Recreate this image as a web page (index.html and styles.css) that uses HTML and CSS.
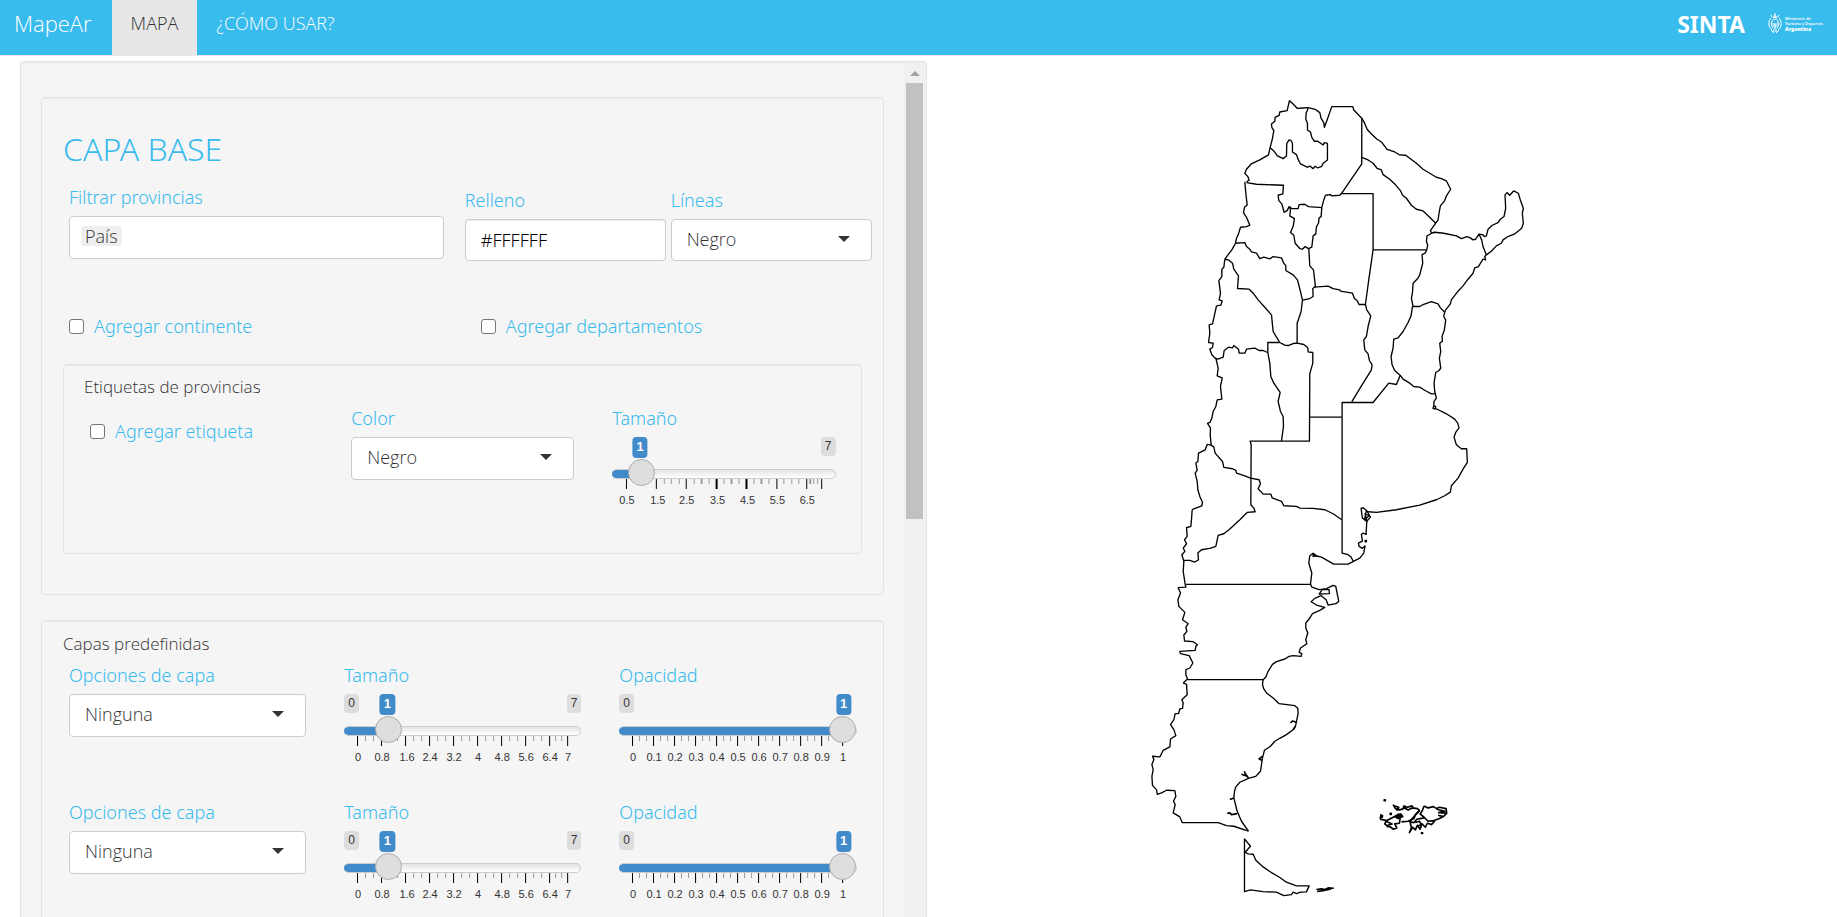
FILE: index.html
```html
<!DOCTYPE html>
<html lang="es">
<head>
<meta charset="utf-8">
<title>MapeAr</title>
<link rel="stylesheet" href="styles.css">
</head>
<body>
<nav class="navbar">
  <a class="brand" href="#">MapeAr</a>
  <a class="nav-link active" href="#mapa">MAPA</a>
  <a class="nav-link" href="#como">¿CÓMO USAR?</a>
  <div class="logos">
    <span class="sinta">SINTA</span>
    <span class="ministry">
      <svg width="14" height="22" viewBox="0 0 14 22" fill="none" stroke="#fff" stroke-width="1">
        <ellipse cx="7" cy="12" rx="3.500" ry="5"/>
        <path d="M3 6C0 9 0 15 4 18M11 6c3 3 3 9-1 12M3.500 12h7M7 12v4M5 14h4"/>
        <path d="M4 5L3 3M7 5V1M10 5l1-2M5 5.500Q7 2 9 5.500Z"/>
        <path d="M3 18l3 3M11 18l-3 3M5 19h4"/>
      </svg>
      <span class="ministry-text"><span>Ministerio de</span><span>Turismo y Deportes</span><b>Argentina</b></span>
    </span>
  </div>
</nav>

<main class="page" id="mapa">
  <aside class="sidebar">
    <form class="sidebar-body">
      <section class="well base">
        <h2>CAPA BASE</h2>
        <div class="row base-row">
          <div class="field filter">
            <label for="provincias">Filtrar provincias</label>
            <div class="tags"><span class="tag">País</span><input id="provincias" type="text"></div>
          </div>
          <div class="pair">
            <div class="field">
              <label for="relleno">Relleno</label>
              <input class="control color" id="relleno" type="text" value="#FFFFFF">
            </div>
            <div class="field">
              <label for="lineas">Líneas</label>
              <div class="select"><select class="control" id="lineas"><option>Negro</option></select></div>
            </div>
          </div>
        </div>
        <div class="row checks">
          <label class="check"><input type="checkbox">Agregar continente</label>
          <label class="check"><input type="checkbox">Agregar departamentos</label>
        </div>
        <section class="well inner">
          <h3>Etiquetas de provincias</h3>
          <div class="row thirds">
            <label class="check lowered"><input type="checkbox">Agregar etiqueta</label>
            <div class="field">
              <label for="color">Color</label>
              <div class="select"><select class="control" id="color"><option>Negro</option></select></div>
            </div>
            <div class="field">
              <label for="tam0">Tamaño</label>
              <div class="slider" style="--f:.075">
                <div class="bounds"><span></span><span class="bound">7</span></div>
                <output class="bubble" for="tam0">1</output>
                <input id="tam0" type="range" min="0" max="1000" value="75">
                <svg class="scale" viewBox="0 0 224 28">
                  <path class="minor" d="M52.500 0v5M59.500 0v5M67.500 0v5M82.500 0v5M97.500 0v5M112.500 0v5M127.500 0v5M142.500 0v5M157.500 0v5M172.500 0v5M180.500 0v5M187.500 0v5M202.500 0v5M206.500 0v5"/>
                  <path class="minor wide" d="M90 0v5M120 0v5M150 0v5M199 0v5"/>
                  <path class="major" d="M14.500 0v10M44.500 0v10M74.500 0v10M165.500 0v10M195.500 0v10M210.500 0v10"/>
                  <path class="major wide" d="M105 0v10M135 0v10"/>
                  <text x="15" y="25">0.5</text><text x="46" y="25">1.5</text><text x="75" y="25">2.5</text><text x="106" y="25">3.5</text><text x="136" y="25">4.5</text><text x="166" y="25">5.5</text><text x="196" y="25">6.5</text>
                </svg>
              </div>
            </div>
          </div>
        </section>
      </section>

      <section class="well layers">
        <h3>Capas predefinidas</h3>
        <div class="row thirds">
          <div class="field">
            <label for="capa1">Opciones de capa</label>
            <div class="select"><select class="control" id="capa1"><option>Ninguna</option></select></div>
          </div>
          <div class="field">
            <label for="tam1">Tamaño</label>
            <div class="slider" style="--f:.143">
              <div class="bounds"><span class="bound">0</span><span class="bound">7</span></div>
              <output class="bubble" for="tam1">1</output>
              <input id="tam1" type="range" min="0" max="7" value="1">
              <svg class="scale" viewBox="0 0 237 28">
                <path class="minor" d="M21.5 0v5M29.5 0v5M45.5 0v5M53.5 0v5M69.5 0v5M77.5 0v5M93.5 0v5M101.5 0v5M117.5 0v5M125.5 0v5M141.5 0v5M149.5 0v5M165.5 0v5M173.5 0v5M189.5 0v5M197.5 0v5M211.5 0v5M217.5 0v5"/>
                <path class="major" d="M13.5 0v10M37.5 0v10M61.5 0v10M85.5 0v10M109.5 0v10M133.5 0v10M157.5 0v10M181.5 0v10M205.5 0v10M223.5 0v10"/>
                <text x="14" y="25">0</text><text x="38" y="25">0.8</text><text x="63" y="25">1.6</text><text x="86" y="25">2.4</text><text x="110" y="25">3.2</text><text x="134" y="25">4</text><text x="158" y="25">4.8</text><text x="182" y="25">5.6</text><text x="206" y="25">6.4</text><text x="224" y="25">7</text>
              </svg>
            </div>
          </div>
          <div class="field">
            <label for="opa1">Opacidad</label>
            <div class="slider" style="--f:1">
              <div class="bounds"><span class="bound">0</span></div>
              <output class="bubble" for="opa1">1</output>
              <input id="opa1" type="range" min="0" max="1" value="1">
              <svg class="scale" viewBox="0 0 237 28">
                <path class="minor" d="M20.5 0v5M27.5 0v5M41.5 0v5M48.5 0v5M62.5 0v5M69.5 0v5M83.5 0v5M90.5 0v5M104.5 0v5M111.5 0v5M125.5 0v5M132.5 0v5M146.5 0v5M153.5 0v5M167.5 0v5M174.5 0v5M188.5 0v5M195.5 0v5M209.5 0v5M216.5 0v5"/>
                <path class="major" d="M13.5 0v10M34.5 0v10M55.5 0v10M76.5 0v10M97.5 0v10M118.5 0v10M139.5 0v10M160.5 0v10M181.5 0v10M202.5 0v10M223.5 0v10"/>
                <text x="14" y="25">0</text><text x="35" y="25">0.1</text><text x="56" y="25">0.2</text><text x="77" y="25">0.3</text><text x="98" y="25">0.4</text><text x="119" y="25">0.5</text><text x="140" y="25">0.6</text><text x="161" y="25">0.7</text><text x="182" y="25">0.8</text><text x="203" y="25">0.9</text><text x="224" y="25">1</text>
              </svg>
            </div>
          </div>
        </div>
        <div class="row thirds">
          <div class="field">
            <label for="capa2">Opciones de capa</label>
            <div class="select"><select class="control" id="capa2"><option>Ninguna</option></select></div>
          </div>
          <div class="field">
            <label for="tam2">Tamaño</label>
            <div class="slider" style="--f:.143">
              <div class="bounds"><span class="bound">0</span><span class="bound">7</span></div>
              <output class="bubble" for="tam2">1</output>
              <input id="tam2" type="range" min="0" max="7" value="1">
              <svg class="scale" viewBox="0 0 237 28">
                <path class="minor" d="M21.5 0v5M29.5 0v5M45.5 0v5M53.5 0v5M69.5 0v5M77.5 0v5M93.5 0v5M101.5 0v5M117.5 0v5M125.5 0v5M141.5 0v5M149.5 0v5M165.5 0v5M173.5 0v5M189.5 0v5M197.5 0v5M211.5 0v5M217.5 0v5"/>
                <path class="major" d="M13.5 0v10M37.5 0v10M61.5 0v10M85.5 0v10M109.5 0v10M133.5 0v10M157.5 0v10M181.5 0v10M205.5 0v10M223.5 0v10"/>
                <text x="14" y="25">0</text><text x="38" y="25">0.8</text><text x="63" y="25">1.6</text><text x="86" y="25">2.4</text><text x="110" y="25">3.2</text><text x="134" y="25">4</text><text x="158" y="25">4.8</text><text x="182" y="25">5.6</text><text x="206" y="25">6.4</text><text x="224" y="25">7</text>
              </svg>
            </div>
          </div>
          <div class="field">
            <label for="opa2">Opacidad</label>
            <div class="slider" style="--f:1">
              <div class="bounds"><span class="bound">0</span></div>
              <output class="bubble" for="opa2">1</output>
              <input id="opa2" type="range" min="0" max="1" value="1">
              <svg class="scale" viewBox="0 0 237 28">
                <path class="minor" d="M20.5 0v5M27.5 0v5M41.5 0v5M48.5 0v5M62.5 0v5M69.5 0v5M83.5 0v5M90.5 0v5M104.5 0v5M111.5 0v5M125.5 0v5M132.5 0v5M146.5 0v5M153.5 0v5M167.5 0v5M174.5 0v5M188.5 0v5M195.5 0v5M209.5 0v5M216.5 0v5"/>
                <path class="major" d="M13.5 0v10M34.5 0v10M55.5 0v10M76.5 0v10M97.5 0v10M118.5 0v10M139.5 0v10M160.5 0v10M181.5 0v10M202.5 0v10M223.5 0v10"/>
                <text x="14" y="25">0</text><text x="35" y="25">0.1</text><text x="56" y="25">0.2</text><text x="77" y="25">0.3</text><text x="98" y="25">0.4</text><text x="119" y="25">0.5</text><text x="140" y="25">0.6</text><text x="161" y="25">0.7</text><text x="182" y="25">0.8</text><text x="203" y="25">0.9</text><text x="224" y="25">1</text>
              </svg>
            </div>
          </div>
        </div>
      </section>
    </form>
    <div class="scrollbar"><span class="scroll-up"></span><span class="scroll-thumb"></span></div>
  </aside>

  <svg class="map" viewBox="927 61 911 856" preserveAspectRatio="xMidYMin meet" role="img" aria-label="Mapa de Argentina">
    <!-- north -->
    <g transform="translate(1190 80) scale(.33333)">
      <path d="M170 305L178 301 174 290 165 280 170 268 184 252 210 240 236 225 241 203 248 175 252 152 246 142 245 132 255 124 256 112 268 106 270 96 292 92 299 62 310 72 322 85 340 84 355 83 376 88 390 98 394 115 402 128 404 142 412 120 426 80 489 80 492 90 516 115V252L455 341"/>
      <path d="M355 85L349 100 348 118 353 130 353 150 362 156 366 172 374 184 384 184 400 195 404 188 413 190V240L400 250 396 259 384 264 376 259 370 266 360 258 354 262 332 252 324 236 320 224 308 216V190L303 181 298 180 291 190 290 228 280 236 262 227 252 213 241 203"/>
      <path d="M516 115L524 128 532 148 545 162 562 178 575 186 592 208 615 216 630 225 648 226 680 250 700 268 720 280 740 292 755 296 770 303 783 328 770 348 765 362 752 378 748 400 745 420 738 430 722 452 726 460"/>
      <path d="M516 232L535 240 550 250 562 265 575 270 580 284 600 298 615 312 632 332 638 345 650 355 665 376 680 388 700 393 716 408 738 430"/>
      <path d="M407 346L422 344 426 348 450 346 455 341H550V510L537 600 527 674H508L502 662 494 656 488 640 452 634 450 630 430 626 415 619 372 622"/>
      <path d="M550 510H711"/>
      <path d="M170 308L200 313 281 316 279 342 265 346 267 362 276 372 283 397 292 392 298 380 306 386 325 386 328 374 345 373 356 380 396 383 402 360 407 346"/>
      <path d="M298 380L302 388 300 408 314 416 310 440 302 458 312 466 316 490 330 506 338 508 346 500 356 506 366 502 370 468 378 462 380 440 386 430 388 414 394 410 396 383"/>
      <path d="M165 306L168 340 172 375 164 382 161 398 170 412 180 436 170 440 152 442 146 462 140 475 137 490 126 510 115 524 105 538"/>
      <path d="M137 490L165 488 170 500 180 508 185 516 200 520 210 536 222 532 240 537 250 530 275 534 282 550 288 558 288 572 310 585 323 600 332 635 338 661"/>
      <path d="M357 506L360 558 371 570 377 620 369 626 370 650 360 656 338 661"/>
      <path d="M105 538L116 540 128 550 132 568 146 588 143 626 178 628 190 640 205 660"/>
      <path d="M105 538L102 562 96 568 96 590 87 602 92 640 88 660 97 663 93 676 80 678"/>
      <path d="M726 460L712 468 710 485 714 495 711 510 706 520 697 524 699 550 690 585 684 596 670 610 668 640 665 655 670 680"/>
      <path d="M725 460L735 457 762 460 800 468 815 476 832 470 842 474 850 480 858 478 868 463 876 480 880 500 890 525"/>
      <path d="M868 463L878 464 884 470 890 468 895 448 908 436 925 428 932 418 943 410 948 385 946 345 952 338 960 346 972 333 986 340 992 360 1001 385 998 400 1001 430 996 445 975 462 955 470 940 480 935 490 920 498 905 514 890 525 885 530 888 540 880 538 866 560 855 564 850 580 835 598 820 618 805 634 785 660 782 672 768 690 765 697"/>
      <path d="M668 680L690 680 700 674 725 665 745 672 752 684 765 697"/>
    </g>
    <!-- centre -->
    <g transform="translate(1190 300) scale(.33333)">
      <path d="M80 18L74 45 68 72 58 75 60 100 56 128 70 130 68 143 60 148 66 165 76 175 84 178 100 172 103 152 116 142 128 144 132 137 146 148 148 160 165 160 170 148 195 145 208 152 220 152 233 158"/>
      <path d="M205 0L225 22 245 45 250 95 260 112 270 128 285 136 295 137 310 131 322 130 342 134 354 144 355 156 369 158V190L360 222 359 424H181L184 435 183 615 192 625 196 636 172 638 150 660"/>
      <path d="M270 128H234V158L240 190 243 230 252 250 271 278 265 305 272 335 280 350 281 380 275 424"/>
      <path d="M338 1L334 35 322 70V130M359 352H456"/>
      <path d="M78 175L85 205 82 228 97 234 92 260 96 298 82 300 78 320 70 335 66 355 60 368 53 371 62 385 61 405 64 436 72 442 76 460 98 485 102 503 128 507 138 512 140 520 165 528 182 535 208 540 212 552 205 567 220 583 243 583 247 594 275 605 282 618 320 620 330 625 370 626 405 630 430 642 456 660"/>
      <path d="M457 660V308H550L597 250 620 254 631 228"/>
      <path d="M527 14L531 30 543 48 535 80 530 110 522 120 525 150 535 162 539 182 547 195 545 210 515 258 486 306"/>
      <path d="M668 20L664 48 655 68 640 95 625 114 612 118 610 145 604 170 607 195 615 212 631 226 640 238 660 250 672 260 690 262 706 272 725 282 738 282"/>
      <path d="M765 37L762 50 768 60 764 90 757 110 758 124 750 130 753 155 749 175 753 205 748 212 738 218 733 250 735 275 740 295 733 305 732 318 738 320 736 328 730 326 732 318M738 326L770 342 795 358 804 370 808 384 798 398 793 412 800 435 815 447H831L833 488 820 508 805 535 785 558 782 577 765 588 740 600 690 616 620 630 560 638 535 636"/>
      <path d="M64 436L52 434 46 450 26 460 24 485 18 490 22 512 16 520 22 545 24 570 30 590 38 608 36 618 10 628 7 630"/>
    </g>
    <!-- north of Patagonia -->
    <g transform="translate(1130 440) scale(.33333)">
      <path d="M187 210L185 238 183 260 170 264 172 290 164 300 170 312 160 325 165 335 156 345 162 365 160 395 166 434 168 442 145 444 152 460 144 480 147 500 165 518 158 540 175 552 168 562 171 575 162 586 164 604 190 606 203 615 198 620 196 632 150 635 152 642 178 648 189 670 180 685 168 690 168 705 173 718 160 730"/>
      <path d="M330 240L300 268 282 282 265 287 258 320 240 326 215 330 204 340 206 360 195 367 180 362 162 362"/>
      <path d="M637 240V340L655 345 664 352 670 364"/>
      <path d="M168 434H542L546 400 537 370 540 348 550 341 558 348 575 352 612 373H655L690 355 702 340 706 318"/>
      <path d="M706 318L698 326 688 320 686 310 698 304 695 284 700 280 709 284 711 245 722 232 712 214 700 204 694 206 698 235 712 246 706 222 718 228 704 240 710 212"/>
      <path class="solid" d="M550 341L560 348 550 350ZM706 302h4v4h-4z"/>
      <path d="M542 433L546 442 568 450 590 447 610 437 618 440 622 460 627 485 618 492 595 496 589 480 574 468 555 476 544 486 560 496 585 503 570 512 548 522 538 538 528 550 528 565 534 580 528 600 531 612 512 625 508 638 516 642 514 650 490 648 478 650 465 658 440 666 428 674 415 695 408 712 400 720H173"/>
      <path d="M568 463L577 450H598L599 462Z"/>
    </g>
    <!-- south -->
    <g transform="translate(1130 660) scale(.33333)">
      <path d="M160 70L170 74 172 105 156 120 160 130 158 146 150 148 146 162 136 162 132 180 122 195 132 210 138 228 122 238 120 262 100 272 90 292 68 290 72 300 66 315 70 330 66 350 68 378 80 390 82 404 95 400 110 392 135 393 138 410 131 425 136 435 130 460 150 472 157 489H265L290 498 312 500 356 515"/>
      <path d="M400 58L398 75 402 88 410 100 430 115 448 132 495 138 504 146 505 162 500 185 497 200 488 212 470 225 450 236 435 245 422 260 404 272 398 295 392 335 378 350 356 356 330 368 318 382 314 395 312 415 322 455 335 485 356 515"/>
      <path class="coast" d="M500 188L488 184 482 190M496 200l-5 10M397 290L388 298 396 302M356 355L345 340 344 335M352 350L335 344M312 415L300 420M322 462L305 465 300 460 292 461"/>
      <path d="M344 538L362 560 346 578 355 583 370 584 378 602 400 622 420 636 450 654 470 668 500 679H538L530 697 512 698 500 702 490 698 485 705 462 708 440 698 400 696 362 691 344 696Z"/>
      <path class="coast" d="M560 690L575 688 585 690 595 685 612 686M562 696L575 694 590 691 604 688"/>
    </g>
    <!-- islands -->
    <g transform="translate(1375 795) scale(.33333)">
      <path class="solid" d="M28 15h4v4h-4zM46 56h4v4h-4zM140 114h4v3h-4zM18 60l6 4-2 5-6 2zM60 66l12-8 10 8-8 6z"/>
      <path class="coast" d="M55 30L62 42 75 46 90 40 100 46 112 40 128 42 134 48 122 60 118 72 100 80 80 82M58 34L72 38 66 46 84 44 88 34 98 38 112 34 116 42M62 64L78 58 84 66 70 72 60 66M16 74L36 78 60 66 76 72 74 86 60 88 66 100 56 104 40 92 52 88 34 80 30 88 42 98"/>
      <path class="coast" d="M134 48L118 66 104 82M148 34L142 50 136 58 148 68 160 80 178 78 194 72 206 66 216 56 214 42 194 38 186 42 176 36 160 40 148 34M186 44L210 50 192 54 216 56M190 62L206 66M148 70L126 74 118 84 106 82 110 100 104 114 114 98 122 106 128 92 136 104 142 88 152 98 158 86 170 90 180 80M122 84L134 80 140 90 130 94"/>
    </g>
  </svg>
</main>
</body>
</html>
```

FILE: styles.css
```css
* { box-sizing: border-box; }

body {
  margin: 0;
  height: 100vh;
  display: flex;
  flex-direction: column;
  overflow: hidden;
  background: #fff;
  color: #333;
  font: 300 18px/24px "Open Sans", sans-serif;
}

.navbar {
  display: flex;
  flex: none;
  height: 56px;
  background: #38bbed;
  border-bottom: 1px solid #e7e7e7;
}

.navbar a { color: #fff; text-decoration: none; }

.brand { padding: 11px 20px 0 14px; font-size: 22px; }

.nav-link { padding: 11px 19px 0; font-size: 18px; }

.navbar .active {
  background: #e7e7e7;
  color: #333;
  height: 56px;
}

.logos {
  display: flex;
  align-items: flex-start;
  gap: 23px;
  margin-left: auto;
  padding: 12px 14px 0 0;
  color: #fff;
}

.sinta { font: 700 23px/24px "Noto Sans", sans-serif; }

.ministry { display: flex; gap: 3px; }

.ministry-text {
  display: flex;
  flex-direction: column;
  padding-top: 4px;
  font: 600 4px/5px "Noto Sans", sans-serif;
}

.ministry-text b { font-size: 5px; line-height: 6px; }

.page {
  display: flex;
  flex: 1;
  min-height: 0;
  padding: 5px 0 0 20px;
}

.sidebar {
  display: flex;
  flex: none;
  width: calc(50% - 2px);
  overflow: hidden;
  background: #f5f5f5;
  border: 1px solid #e3e3e3;
  border-bottom: 0;
  border-radius: 4px 4px 0 0;
  box-shadow: inset 0 1px 1px rgba(0, 0, 0, .05);
}

.sidebar-body { flex: 1; padding: 35px 20px 0; }

.scrollbar {
  display: flex;
  flex-direction: column;
  align-items: center;
  width: 22px;
  background: #f0f0f0;
}

.scroll-up {
  margin: 9px 0 7px;
  border: 5px solid transparent;
  border-top: 0;
  border-bottom-color: #a3a3a3;
}

.scroll-thumb { width: 17px; height: 51%; background: #c1c1c1; }

.well {
  margin-bottom: 25px;
  padding: 11px 21px 40px;
  border: 1px solid #e3e3e3;
  border-radius: 4px;
  box-shadow: inset 0 1px 1px rgba(0, 0, 0, .05);
}

.base { padding-top: 31px; }

.inner { margin: 26px 0 0; padding: 10px 20px 46px; }

h2 {
  margin: 0 0 16px;
  color: #38bbed;
  font: 300 32px/40px "Noto Sans", sans-serif;
}

h3 { margin: 0 0 7px; font: inherit; font-size: 17px; }

.row { display: grid; margin: 0 6px; }

.base-row {
  grid-template-columns: 375fr 407fr;
  gap: 21px;
  margin-right: -10px;
}

.pair {
  display: grid;
  grid-template-columns: 1fr 1fr;
  gap: 5px;
  padding-top: 3px;
}

.checks { grid-template-columns: 412fr 375fr; margin-top: 53px; }

.thirds { grid-template-columns: repeat(3, 1fr); gap: 38px; margin-right: 5px; }

.layers .thirds { margin-bottom: 36px; }

.field, .select { min-width: 0; }

label {
  display: block;
  color: #38bbed;
  font-family: "Noto Sans", sans-serif;
}

.field > label { margin-bottom: 7px; }

.control, .tags {
  display: block;
  width: 100%;
  height: 43px;
  background: #fff;
  border: 1px solid #ccc;
  border-radius: 4px;
}

.control {
  appearance: none;
  padding: 0 15px 3px;
  color: #333;
  font: inherit;
}

.base-row .control { height: 42px; }

.base-row .color {
  padding: 0 15px;
  color: #000;
  font-family: "Noto Sans", sans-serif;
  box-shadow: inset 0 1px 1px rgba(0, 0, 0, .075);
}

.select { position: relative; }

.select::after {
  content: "";
  position: absolute;
  top: 17px;
  right: 22px;
  border: 6px solid transparent;
  border-top-color: #333;
  border-bottom: 0;
}

.tags { display: flex; align-items: flex-start; padding: 9px 11px; }

.tag {
  padding: 0 4px;
  background: #efefef;
  border-radius: 3px;
  line-height: 20px;
}

.tags input { flex: 1; min-width: 0; border: 0; padding: 0; font: inherit; outline: 0; }

.check { display: flex; align-items: center; gap: 10px; }

.check input {
  appearance: none;
  width: 15px;
  height: 15px;
  margin: 0;
  background: #fff;
  border: 1px solid #767676;
  border-radius: 3px;
}

.lowered { align-self: start; padding-top: 13px; }

.slider { position: relative; font-family: "Liberation Sans", Arial, sans-serif; }

.bounds { display: flex; justify-content: space-between; height: 20px; }

.bound, .bubble {
  height: 19px;
  padding: 0 4px;
  border-radius: 4px;
  font-size: 12px;
  font-weight: 400;
  line-height: 18px;
}

.bound { background: #ddd; }

.bubble {
  position: absolute;
  top: 0;
  left: calc(13px + (100% - 26px) * var(--f));
  height: 21px;
  transform: translateX(-50%);
  background: #428bca;
  color: #fff;
  font-weight: 700;
  font-size: 13px;
  line-height: 20px;
}

.slider input {
  appearance: none;
  position: relative;
  z-index: 1;
  display: block;
  width: 100%;
  height: 26px;
  margin: 4px 0 0;
  background: none;
}

.slider input::-webkit-slider-runnable-track {
  height: 10px;
  border: 1px solid #ccc;
  border-left-color: #428bca;
  border-radius: 8px;
  background:
    linear-gradient(#428bca, #428bca) 0 0 / calc(13px + (100% - 26px) * var(--f)) 100% no-repeat border-box,
    linear-gradient(#e4e4e4, #fff);
}

.slider input::-webkit-slider-thumb {
  appearance: none;
  width: 27px;
  height: 27px;
  margin-top: -11px;
  background: #dedede;
  border: 1px solid #ababab;
  border-radius: 50%;
}

.scale { display: block; width: 100%; margin-top: -8px; }

.scale text {
  font: 400 11px "Liberation Sans", Arial, sans-serif;
  text-anchor: middle;
  fill: #333;
}

.minor { stroke: #999; stroke-width: 1; }
.major { stroke: #000; stroke-width: 1; }
.wide { stroke-width: 2; }

.map { flex: 1; min-width: 0; height: 100%; }

.map path {
  fill: none;
  stroke: #000;
  stroke-width: 4;
  stroke-linejoin: round;
}

.map .coast { stroke-width: 5; }
.map .solid { fill: #000; }
```
